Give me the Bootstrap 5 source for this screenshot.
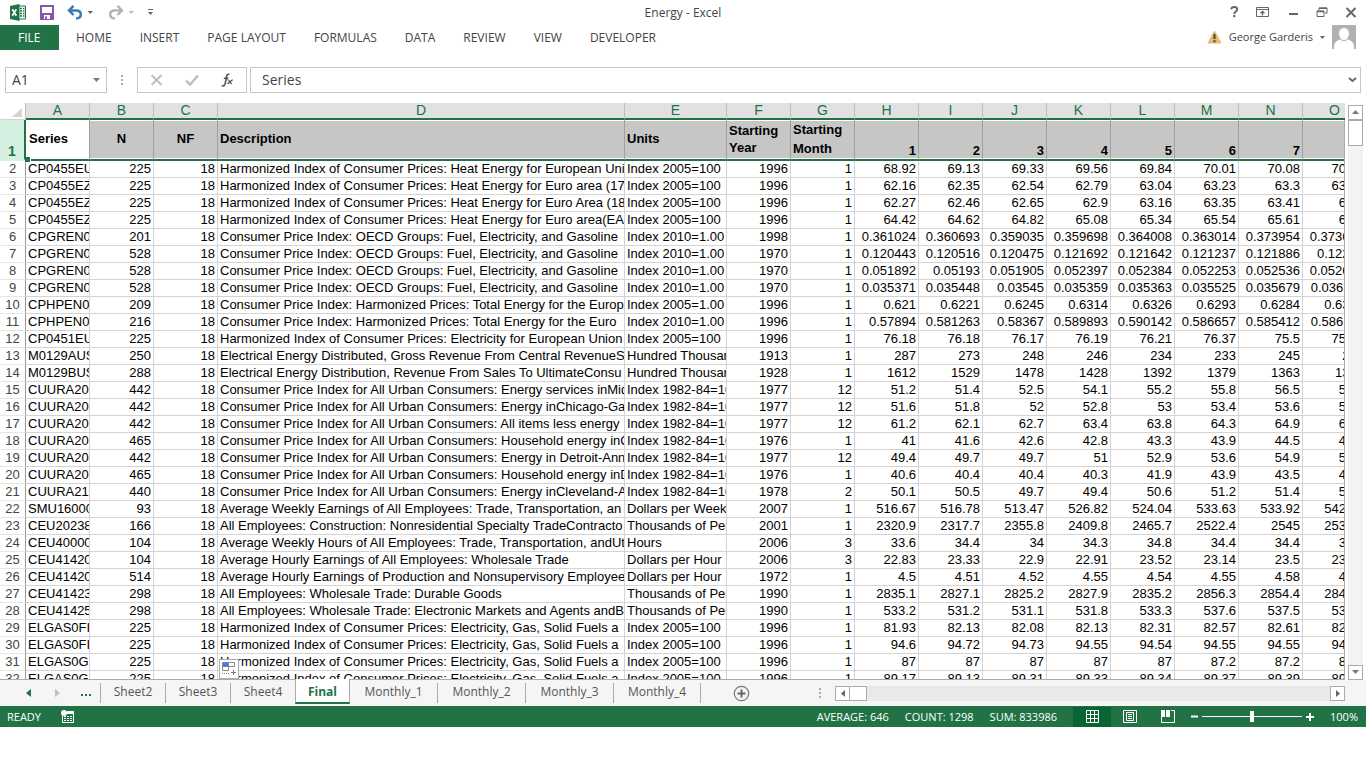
<!DOCTYPE html>
<html lang="en">
<head>
<meta charset="utf-8">
<meta name="viewport" content="width=device-width, initial-scale=1">
<title>Energy - Excel</title>
<link href="https://cdn.jsdelivr.net/npm/bootstrap@5.3.0/dist/css/bootstrap.min.css" rel="stylesheet">
<style>
:root { --xl: #217346; --ink: #444; --line: #d4d4d4; --edge: #ababab; }
body { font-family: "Open Sans", "Noto Sans", sans-serif; font-size: 12px; line-height: 16px; color: var(--ink); background: #fff; }
button { background: none; border: 0; padding: 0; color: inherit; line-height: 0; }
svg { display: block; flex: none; }
.app { padding-bottom: 41px; overflow: hidden; }
.titlebar { height: 25px; display: grid; grid-template-columns: 1fr auto 1fr; }
.titlebar .caption-text { padding-top: 2px; }
.quick { padding-left: 9px; }
.quick .gap-wide { margin-left: 13px; }
.winbtns { gap: 17px; padding-right: 9px; color: #666; }
.ribbon { height: 25px; }
.ribbon .nav-link { padding: 5px 14px 4px; line-height: 16px; color: var(--ink); }
.ribbon .file-tab { background: var(--xl); color: #fff; padding: 5px 19px 4px 18px; margin-right: 3px; width: 59px; }
.account { padding-right: 10px; gap: 7px; font-size: 11px; }
.fbar { margin: 17px 5px 10px; height: 26px; }
.fbar .box { border: 1px solid #c6c6c6; height: 26px; background: #fff; }
.fbar input { border: 0; outline: 0; font-size: 14px; line-height: 20px; color: var(--ink); padding: 0; min-width: 0; background: none; }
.namebox { width: 102px; padding: 0 6px; }
.fxbox { width: 110px; padding: 0 12px; }
.fxinput { padding: 0 3px 0 11px; margin-left: 3px; }
.grip { width: 30px; display: flex; justify-content: center; }
.sheet { overflow: hidden; border-bottom: 1px solid var(--edge); font-family: "Liberation Sans", Arial, sans-serif; font-size: 13px; color: #000; }
.sheet::after { content: ""; position: absolute; top: 17px; right: 0; bottom: 0; width: 1px; background: var(--edge); }
.gridtable { table-layout: fixed; width: 100%; border-collapse: separate; border-spacing: 0; }
.gridtable td, .gridtable th { overflow: hidden; white-space: nowrap; padding: 0 2px; height: 17px; line-height: 16px; border-right: 1px solid var(--line); border-bottom: 1px solid var(--line); font-weight: 400; }
.gridtable .n { text-align: right; }
.gridtable tbody th { text-align: center; color: var(--ink); border-right-color: #999; border-bottom-color: #e6e6e6; }
.gridtable thead th { background: #e1e1e1; color: var(--xl); font-size: 14px; text-align: center; border-bottom: 2px solid var(--xl); border-right-color: #bfbfbf; line-height: 15px; }
.gridtable thead .corner { background: #fff; border-bottom: 1px solid var(--line); }
.corner svg { margin: 3px 0 0 10px; }
.gridtable .heads td { height: 41px; font-weight: 700; background: #c6c6c6; border-right-color: #a0a0a0; border-bottom: 2px solid var(--xl); box-shadow: inset 0 1px #fff, inset 0 -1px #fff; vertical-align: middle; }
.gridtable .heads .num { vertical-align: bottom; text-align: right; }
.gridtable .heads .active-cell { background: #fff; padding-left: 3px; }
.gridtable .heads th { background: #d3f0e0; color: var(--xl); font-weight: 700; font-size: 14px; vertical-align: bottom; border-right: 2px solid var(--xl); border-bottom: 2px solid #d3f0e0; }
.gridtable .heads .lines { line-height: 17px; }
.gridtable .heads .lines.tall { line-height: 19px; }
.fillhandle { position: absolute; left: 25px; top: 54px; width: 6px; height: 5px; background: var(--xl); border-right: 1px solid #fff; }
.autofill { position: absolute; left: 219px; bottom: 0; width: 20px; height: 20px; background: #fff; border: 1px solid var(--edge); z-index: 1; }
.vscroll { width: 15px; margin: 2px 3px 0 3px; background: #f3f3f3; }
.sbtn { width: 15px; height: 15px; border: 1px solid var(--edge); background: #fff; display: flex; align-items: center; justify-content: center; flex: none; color: #666; }
.vthumb { height: 26px; border: 1px solid var(--edge); background: #fff; }
.tabsbar { height: 27px; background: #f5f5f5; }
.sheetnav { width: 100px; padding-left: 26px; color: var(--xl); }
.tabsbar .sheettab { display: block; width: 65px; height: 20px; margin-top: 3px; line-height: 18px; text-align: center; color: #555; text-decoration: none; border-left: 1px solid var(--edge); }
.tabsbar .sheettab.wide { width: 88px; }
.tabsbar .sheettab.last { border-right: 1px solid var(--edge); }
.tabsbar .sheettab.current { width: 55px; height: 25px; margin-top: -1px; background: #fff; color: var(--xl); font-weight: 700; border-bottom: 2px solid var(--xl); border-right: 1px solid var(--edge); line-height: 26px; position: relative; z-index: 1; }
.tabsbar .sheettab.current + .sheettab { border-left: 0; width: 87px; }
.hscroll { width: 37.3%; min-width: 200px; margin-right: 21px; height: 15px; background: #e9e9e9; }
.hthumb { width: 17px; height: 15px; border: 1px solid var(--edge); border-left: 0; background: #fff; }
.status { height: 21px; background: var(--xl); color: #fff; font-size: 11px; padding-left: 7px; }
.viewbtn { width: 38px; height: 20px; display: flex; align-items: center; justify-content: center; }
.viewbtn.on { background: #0a6332; }
.zoomer { -webkit-appearance: none; appearance: none; width: 100px; height: 13px; background: linear-gradient(#fff, #fff) center / 100% 1px no-repeat; margin: 0 4px; }
.zoomer::-webkit-slider-thumb { -webkit-appearance: none; width: 4px; height: 11px; background: #fff; border-radius: 0; }
</style>
</head>
<body>
<div class="app vh-100 d-flex flex-column">

  <header class="titlebar align-items-center">
    <div class="quick d-flex align-items-center">
      <svg width="18" height="17" viewBox="0 0 18 17"><path d="M9 2h7.5v13H9z" fill="#fff" stroke="#217346"/><path d="M11 4.5h2m1 0h1.500M11 7h2m1 0h1.500M11 9.500h2m1 0h1.500M11 12h2m1 0h1.500" stroke="#217346" stroke-width="1.400"/><path d="M1 2l9.500-2v17L1 15z" fill="#217346"/><path d="M3.300 5.200l4 6.600m0-6.600l-4 6.600" stroke="#fff" stroke-width="1.700"/></svg>
      <button class="gap-wide" aria-label="Save"><svg width="14" height="15" viewBox="0 0 14 15"><path d="M1 1h12v13H1z" fill="#fff" stroke="#8a56ad" stroke-width="2"/><path d="M1 8h12v6H1z" fill="#8a56ad"/><path d="M4 10h6v4H4z" fill="#fff"/><path d="M5 11.500h2V14H5z" fill="#8a56ad"/></svg></button>
      <button class="gap-wide" aria-label="Undo"><svg width="26" height="15" viewBox="0 0 26 15"><path d="M6.500 .8L2 5.400L6.500 10M2.500 5.400h6.500c3.500 0 4.800 1.600 4.800 3.900S12 13.400 9 13.400" fill="none" stroke="#3e78b5" stroke-width="2.500"/><path d="M20.500 6h5.500l-2.700 3z" fill="#666"/></svg></button>
      <button class="gap-wide" aria-label="Redo"><svg width="28" height="15" viewBox="0 0 28 15"><path d="M11.500 .8l4.500 4.600L11.500 10M15.500 5.400H9C5.500 5.400 4.200 7 4.200 9.300s1.800 4.100 4.800 4.100" fill="none" stroke="#b1b1b1" stroke-width="2.300"/><path d="M22.500 6h5.500l-2.700 3z" fill="#bbb"/></svg></button>
      <button class="gap-wide" aria-label="Customize Quick Access Toolbar"><svg width="7" height="8" viewBox="0 0 7 8"><path d="M1 1.500h5" stroke="#666"/><path d="M1 4h5L3.500 7z" fill="#666"/></svg></button>
    </div>
    <div class="caption-text">Energy - Excel</div>
    <div class="winbtns d-flex align-items-center justify-content-end">
      <button aria-label="Help"><svg width="9" height="12" viewBox="0 0 9 12"><path d="M1.200 3.300C1.500 1.800 2.700 1 4.200 1s3 .9 3 2.400c0 2.200-2.900 2-2.900 4.600" fill="none" stroke="#666" stroke-width="2"/><path d="M3.200 9h2.200v2.200H3.200z" fill="#666"/></svg></button>
      <button aria-label="Ribbon Display Options"><svg width="14" height="11" viewBox="0 0 14 11"><path d="M.5.5h12v9H.5zM.5 2.500h12" fill="none" stroke="#666"/><path d="M6.500 8.500V4.500M4.500 6.300l2-2 2 2" fill="none" stroke="#666" stroke-width="1.300"/></svg></button>
      <button aria-label="Minimize"><svg width="12" height="11" viewBox="0 0 12 11"><path d="M2 7h9" stroke="#666" stroke-width="2"/></svg></button>
      <button aria-label="Restore"><svg width="12" height="11" viewBox="0 0 12 11"><path d="M3 3V1h8v5H9M1 4h7v5.500H1z" fill="none" stroke="#666"/><path d="M3 1.200h8M1 4.500h7" stroke="#666" stroke-width="1.500"/></svg></button>
      <button aria-label="Close"><svg width="12" height="11" viewBox="0 0 12 11"><path d="M1.500 1l9 9m0-9l-9 9" stroke="#666" stroke-width="2"/></svg></button>
    </div>
  </header>

  <nav class="ribbon d-flex align-items-center">
    <a class="nav-link file-tab" href="#">FILE</a>
    <a class="nav-link" href="#">HOME</a>
    <a class="nav-link" href="#">INSERT</a>
    <a class="nav-link" href="#">PAGE LAYOUT</a>
    <a class="nav-link" href="#">FORMULAS</a>
    <a class="nav-link" href="#">DATA</a>
    <a class="nav-link" href="#">REVIEW</a>
    <a class="nav-link" href="#">VIEW</a>
    <a class="nav-link" href="#">DEVELOPER</a>
    <div class="account ms-auto d-flex align-items-center">
      <svg width="15" height="14" viewBox="0 0 15 14"><path d="M7.500 1L14 13H1z" fill="#e8bb74" stroke="#e8bb74" stroke-linejoin="round"/><path d="M7.500 4v5m0 1.200v2" stroke="#444" stroke-width="2"/></svg>
      <a class="text-reset text-decoration-none" href="#">George Garderis</a>
      <svg width="5" height="3" viewBox="0 0 5 3"><path d="M0 0h5L2.500 3z" fill="#666"/></svg>
      <svg width="24" height="24" viewBox="0 0 24 24"><path d="M0 0h24v24H0z" fill="#b1b1b1"/><path d="M12 3c3 0 5 2.300 5 5.500 0 2.300-1 4.300-2.500 5.500 3.500.800 6.500 2.500 7.500 6v4H2v-4c1-3.500 4-5.200 7.500-6C8 12.800 7 10.800 7 8.500 7 5.300 9 3 12 3z" fill="#fff"/><path d="M8.500 14.300c1.500 1.700 5.500 1.700 7 0" fill="none" stroke="#b1b1b1"/></svg>
    </div>
  </nav>

  <div class="fbar d-flex">
    <div class="box namebox d-flex align-items-center"><input class="flex-fill" aria-label="Name Box" value="A1"><svg width="7" height="4" viewBox="0 0 7 4"><path d="M0 0h7L3.500 4z" fill="#777"/></svg></div>
    <div class="grip align-items-center"><svg width="3" height="12" viewBox="0 0 3 12"><path d="M0 1h2v2H0zM0 5h2v2H0zM0 9h2v2H0z" fill="#ababab"/></svg></div>
    <div class="box fxbox d-flex align-items-center justify-content-between">
      <button aria-label="Cancel"><svg width="13" height="12" viewBox="0 0 13 12"><path d="M1.500 1l10 10m0-10l-10 10" stroke="#bdbdbd" stroke-width="1.800"/></svg></button>
      <button aria-label="Enter"><svg width="14" height="12" viewBox="0 0 14 12"><path d="M1 6.500l4 4L13 1.500" fill="none" stroke="#bdbdbd" stroke-width="2.400"/></svg></button>
      <button aria-label="Insert Function"><svg width="13" height="14" viewBox="0 0 13 14"><path d="M8.500 1.500C6.500.600 5.800 2 5.500 4L4.200 10.500C3.900 12.500 2.700 13.400.700 12.600M2.800 5.200h4.500" fill="none" stroke="#555" stroke-width="1.600"/><path d="M6.500 6.800c2.300-.500 2 4.200 4.500 3.700M11.800 6.800c-2 0-3 3.800-5.500 3.700" fill="none" stroke="#555" stroke-width="1.200"/></svg></button>
    </div>
    <div class="box fxinput flex-fill d-flex align-items-center"><input class="flex-fill" aria-label="Formula Bar" value="Series"><svg width="9" height="6" viewBox="0 0 9 6"><path d="M1 1l3.500 3L8 1" fill="none" stroke="#666" stroke-width="2"/></svg></div>
  </div>

  <div class="d-flex flex-fill overflow-hidden">
    <main class="sheet position-relative flex-fill">
      <table class="gridtable">
        <colgroup id="cols"></colgroup>
        <thead><tr id="letters"><th class="corner" aria-label="Select all"><svg width="10" height="9" viewBox="0 0 10 9"><path d="M10 0v9H0z" fill="#d4d4d4"/></svg></th></tr></thead>
        <tbody id="rows">
          <tr class="heads"><th>1</th><td class="active-cell">Series</td><td class="text-center">N</td><td class="text-center">NF</td><td>Description</td><td>Units</td><td class="lines">Starting<br>Year</td><td class="lines tall">Starting<br>Month</td><td class="num">1</td><td class="num">2</td><td class="num">3</td><td class="num">4</td><td class="num">5</td><td class="num">6</td><td class="num">7</td><td class="num"></td></tr>
        </tbody>
      </table>
      <span class="fillhandle"></span>
      <button class="autofill" aria-label="Auto Fill Options"><svg width="18" height="18" viewBox="0 0 18 18"><path d="M2.500 2.500h12v4h-12zM2.500 6.500h6v4h-6zM8.500 2.500v4" fill="none" stroke="#8a8a8a"/><path d="M3 3h5v3.500H3z" fill="#3b7cf0"/><path d="M2 13.500h8" stroke="#8a8a8a" stroke-dasharray="1 1"/><path d="M11 12.500h5m-2.500-2.500v5" stroke="#777"/></svg></button>
    </main>
    <div class="vscroll d-flex flex-column">
      <button class="sbtn" aria-label="Scroll up"><svg width="7" height="4" viewBox="0 0 7 4"><path d="M0 4h7L3.500 0z" fill="#777"/></svg></button>
      <div class="vthumb"></div>
      <button class="sbtn mt-auto" aria-label="Scroll down"><svg width="7" height="4" viewBox="0 0 7 4"><path d="M0 0h7L3.500 4z" fill="#777"/></svg></button>
    </div>
  </div>

  <div class="tabsbar d-flex">
    <div class="sheetnav d-flex align-items-center">
      <button aria-label="Previous sheet"><svg width="5" height="8" viewBox="0 0 5 8"><path d="M5 0v8L0 4z" fill="#217346"/></svg></button>
      <button class="ms-4" aria-label="Next sheet"><svg width="5" height="8" viewBox="0 0 5 8"><path d="M0 0v8l5-4z" fill="#c0c0c0"/></svg></button>
      <button class="ms-auto me-2" aria-label="More sheets"><svg width="12" height="8" viewBox="0 0 12 8"><path d="M1 5h2v2H1zM5 5h2v2H5zM9 5h2v2H9z" fill="#217346"/></svg></button>
    </div>
    <a class="sheettab" href="#">Sheet2</a>
    <a class="sheettab" href="#">Sheet3</a>
    <a class="sheettab" href="#">Sheet4</a>
    <a class="sheettab current" href="#">Final</a>
    <a class="sheettab wide" href="#">Monthly_1</a>
    <a class="sheettab wide" href="#">Monthly_2</a>
    <a class="sheettab wide" href="#">Monthly_3</a>
    <a class="sheettab wide last" href="#">Monthly_4</a>
    <button class="ms-4 px-2" aria-label="New sheet"><svg width="17" height="17" viewBox="0 0 17 17"><circle cx="8.500" cy="8.500" r="7.200" fill="none" stroke="#777" stroke-width="1.200"/><path d="M4.500 8.500h8m-4-4v8" stroke="#666" stroke-width="2"/></svg></button>
    <div class="grip align-items-center ms-auto"><svg width="3" height="12" viewBox="0 0 3 12"><path d="M0 1h2v2H0zM0 5h2v2H0zM0 9h2v2H0z" fill="#ababab"/></svg></div>
    <div class="hscroll d-flex align-self-center">
      <button class="sbtn" aria-label="Scroll left"><svg width="4" height="7" viewBox="0 0 4 7"><path d="M4 0v7L0 3.500z" fill="#666"/></svg></button>
      <div class="hthumb"></div>
      <button class="sbtn ms-auto" aria-label="Scroll right"><svg width="4" height="7" viewBox="0 0 4 7"><path d="M0 0v7l4-3.500z" fill="#666"/></svg></button>
    </div>
  </div>

  <footer class="status d-flex align-items-center">
    <span>READY</span>
    <button class="ms-3 ps-1" aria-label="Record macro"><svg width="13" height="13" viewBox="0 0 13 13"><path d="M6.500 1.500h6V12.500h-11V6" fill="none" stroke="#fff"/><path d="M6 1h7v3H6z" fill="#fff"/><circle cx="3" cy="3" r="3" fill="#fff"/><path d="M3 6.500h2m1 0h2m1 0h2m-8 2h2m1 0h2m1 0h2m-8 2h2m1 0h2m1 0h2" stroke="#fff"/></svg></button>
    <span class="ms-auto">AVERAGE: 646</span>
    <span class="ms-3">COUNT: 1298</span>
    <span class="ms-3">SUM: 833986</span>
    <button class="viewbtn on ms-3" aria-label="Normal view"><svg width="13" height="13" viewBox="0 0 13 13"><path d="M.5.500h12v12H.5zM.5 4.500h12m-12 4h12M4.500.500v12m4-12v12" fill="none" stroke="#fff"/></svg></button>
    <button class="viewbtn" aria-label="Page layout view"><svg width="14" height="13" viewBox="0 0 14 13"><path d="M.5.500h13v12H.5z" fill="none" stroke="#fff"/><path d="M3.500 2.500h7v8h-7zM5 4.500h4M5 6.500h4M5 8.500h4" fill="none" stroke="#fff"/></svg></button>
    <button class="viewbtn" aria-label="Page break preview"><svg width="14" height="13" viewBox="0 0 14 13"><path d="M0 0h4v7H0zM5 0h4v7H5z" fill="#fff"/><path d="M.5 6v6.500h13V.500H10" fill="none" stroke="#fff"/></svg></button>
    <button class="ms-1" aria-label="Zoom out"><svg width="7" height="9" viewBox="0 0 7 9"><path d="M0 4.500h7" stroke="#fff" stroke-width="2"/></svg></button>
    <input class="zoomer" type="range" aria-label="Zoom" min="0" max="100" value="50">
    <button aria-label="Zoom in"><svg width="8" height="8" viewBox="0 0 8 8"><path d="M0 4h8M4 0v8" stroke="#fff" stroke-width="2"/></svg></button>
    <span class="ms-3 me-2">100%</span>
  </footer>
</div>

<script src="https://cdn.jsdelivr.net/npm/bootstrap@5.3.0/dist/js/bootstrap.bundle.min.js"></script>
<script>
// Column letters with their widths; the first <col> is the row-number gutter.
const widths = { A: 64, B: 64, C: 64, D: 407, E: 102, F: 64, G: 64, H: 64, I: 64, J: 64, K: 64, L: 64, M: 64, N: 64, O: 64 };
document.getElementById('cols').innerHTML = '<col style="width:26px">' + Object.values(widths).map(w => `<col style="width:${w}px">`).join('');
document.getElementById('letters').insertAdjacentHTML('beforeend', Object.keys(widths).map(c => `<th>${c}</th>`).join(''));

// Series | N | NF | Description | Units | Year | Month | monthly values
const data = `CP0455EU|225|18|Harmonized Index of Consumer Prices: Heat Energy for European Unio|Index 2005=100|1996|1|68.92|69.13|69.33|69.56|69.84|70.01|70.08|70.15
CP0455EZ|225|18|Harmonized Index of Consumer Prices: Heat Energy for Euro area (17|Index 2005=100|1996|1|62.16|62.35|62.54|62.79|63.04|63.23|63.3|63.38
CP0455EZ|225|18|Harmonized Index of Consumer Prices: Heat Energy for Euro Area (18|Index 2005=100|1996|1|62.27|62.46|62.65|62.9|63.16|63.35|63.41|63.5
CP0455EZ|225|18|Harmonized Index of Consumer Prices: Heat Energy for Euro area(EA1|Index 2005=100|1996|1|64.42|64.62|64.82|65.08|65.34|65.54|65.61|65.7
CPGREN0|201|18|Consumer Price Index: OECD Groups: Fuel, Electricity, and Gasoline|Index 2010=1.00|1998|1|0.361024|0.360693|0.359035|0.359698|0.364008|0.363014|0.373954|0.373623
CPGREN0|528|18|Consumer Price Index: OECD Groups: Fuel, Electricity, and Gasoline|Index 2010=1.00|1970|1|0.120443|0.120516|0.120475|0.121692|0.121642|0.121237|0.121886|0.12221
CPGREN0|528|18|Consumer Price Index: OECD Groups: Fuel, Electricity, and Gasoline|Index 2010=1.00|1970|1|0.051892|0.05193|0.051905|0.052397|0.052384|0.052253|0.052536|0.052675
CPGREN0|528|18|Consumer Price Index: OECD Groups: Fuel, Electricity, and Gasoline|Index 2010=1.00|1970|1|0.035371|0.035448|0.03545|0.035359|0.035363|0.035525|0.035679|0.036113
CPHPEN0|209|18|Consumer Price Index: Harmonized Prices: Total Energy for the Europ|Index 2005=1.00|1996|1|0.621|0.6221|0.6245|0.6314|0.6326|0.6293|0.6284|0.6312
CPHPEN0|216|18|Consumer Price Index: Harmonized Prices: Total Energy for the Euro|Index 2010=1.00|1996|1|0.57894|0.581263|0.58367|0.589893|0.590142|0.586657|0.585412|0.586117
CP0451EU|225|18|Harmonized Index of Consumer Prices: Electricity for European Union|Index 2005=100|1996|1|76.18|76.18|76.17|76.19|76.21|76.37|75.5|75.52
M0129AUS|250|18|Electrical Energy Distributed, Gross Revenue From Central RevenueSa|Hundred Thousan|1913|1|287|273|248|246|234|233|245|251
M0129BUS|288|18|Electrical Energy Distribution, Revenue From Sales To UltimateConsu|Hundred Thousan|1928|1|1612|1529|1478|1428|1392|1379|1363|1371
CUURA200|442|18|Consumer Price Index for All Urban Consumers: Energy services inMid|Index 1982-84=10|1977|12|51.2|51.4|52.5|54.1|55.2|55.8|56.5|56.8
CUURA207|442|18|Consumer Price Index for All Urban Consumers: Energy inChicago-Ga|Index 1982-84=10|1977|12|51.6|51.8|52|52.8|53|53.4|53.6|53.9
CUURA207|442|18|Consumer Price Index for All Urban Consumers: All items less energy|Index 1982-84=10|1977|12|61.2|62.1|62.7|63.4|63.8|64.3|64.9|65.2
CUURA207|465|18|Consumer Price Index for All Urban Consumers: Household energy inC|Index 1982-84=10|1976|1|41|41.6|42.6|42.8|43.3|43.9|44.5|44.8
CUURA208|442|18|Consumer Price Index for All Urban Consumers: Energy in Detroit-Ann|Index 1982-84=10|1977|12|49.4|49.7|49.7|51|52.9|53.6|54.9|55.1
CUURA208|465|18|Consumer Price Index for All Urban Consumers: Household energy inD|Index 1982-84=10|1976|1|40.6|40.4|40.4|40.3|41.9|43.9|43.5|43.6
CUURA210|440|18|Consumer Price Index for All Urban Consumers: Energy inCleveland-A|Index 1982-84=10|1978|2|50.1|50.5|49.7|49.4|50.6|51.2|51.4|51.6
SMU16000|93|18|Average Weekly Earnings of All Employees: Trade, Transportation, an|Dollars per Week|2007|1|516.67|516.78|513.47|526.82|524.04|533.63|533.92|542.13
CEU20238|166|18|All Employees: Construction: Nonresidential Specialty TradeContracto|Thousands of Per|2001|1|2320.9|2317.7|2355.8|2409.8|2465.7|2522.4|2545|2533.1
CEU40000|104|18|Average Weekly Hours of All Employees: Trade, Transportation, andUt|Hours|2006|3|33.6|34.4|34|34.3|34.8|34.4|34.4|34.6
CEU41420|104|18|Average Hourly Earnings of All Employees: Wholesale Trade|Dollars per Hour|2006|3|22.83|23.33|22.9|22.91|23.52|23.14|23.5|23.52
CEU41420|514|18|Average Hourly Earnings of Production and Nonsupervisory Employees|Dollars per Hour|1972|1|4.5|4.51|4.52|4.55|4.54|4.55|4.58|4.61
CEU41423|298|18|All Employees: Wholesale Trade: Durable Goods|Thousands of Per|1990|1|2835.1|2827.1|2825.2|2827.9|2835.2|2856.3|2854.4|2849.1
CEU41425|298|18|All Employees: Wholesale Trade: Electronic Markets and Agents andB|Thousands of Per|1990|1|533.2|531.2|531.1|531.8|533.3|537.6|537.5|538.1
ELGAS0FI|225|18|Harmonized Index of Consumer Prices: Electricity, Gas, Solid Fuels a|Index 2005=100|1996|1|81.93|82.13|82.08|82.13|82.31|82.57|82.61|82.65
ELGAS0FI|225|18|Harmonized Index of Consumer Prices: Electricity, Gas, Solid Fuels a|Index 2005=100|1996|1|94.6|94.72|94.73|94.55|94.54|94.55|94.55|94.56
ELGAS0G|225|18|Harmonized Index of Consumer Prices: Electricity, Gas, Solid Fuels a|Index 2005=100|1996|1|87|87|87|87|87|87.2|87.2|87.2
ELGAS0G|225|18|Harmonized Index of Consumer Prices: Electricity, Gas, Solid Fuels a|Index 2005=100|1996|1|89.17|89.13|89.31|89.33|89.34|89.37|89.39|89.41`;
document.getElementById('rows').insertAdjacentHTML('beforeend', data.split('\n').map((line, i) =>
  `<tr><th>${i + 2}</th>` + line.split('|').map((v, c) => `<td${[0, 3, 4].includes(c) ? '' : ' class="n"'}>${v}</td>`).join('') + '</tr>').join(''));
</script>
</body>
</html>
